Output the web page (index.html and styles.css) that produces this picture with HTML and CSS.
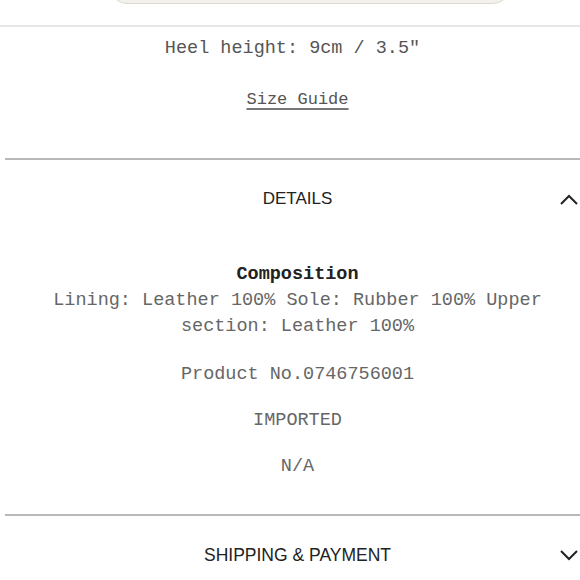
FILE: index.html
```html
<!DOCTYPE html>
<html lang="en">
<head>
<meta charset="utf-8">
<title>Product details</title>
<link rel="stylesheet" href="styles.css">
</head>
<body>
<div class="page">
  <div class="top-btn"></div>
  <div class="rule-light"></div>
  <div class="intro">
    <p class="mono heel">Heel height: 9cm / 3.5"</p>
    <p class="mono guide"><a class="guide-link" href="#">Size Guide</a></p>
  </div>
  <div class="divider"></div>
  <section class="acc">
    <div class="acc-head">
      <span class="acc-spacer"></span>
      <span class="acc-title">DETAILS</span>
      <svg class="chev" width="20" height="12" viewBox="0 0 20 12"><path d="M2 11 L10 3 L18 11" fill="none" stroke="#222" stroke-width="2"/></svg>
    </div>
    <div class="acc-body">
      <h3 class="mono comp-title">Composition</h3>
      <p class="mono comp">Lining: Leather 100% Sole: Rubber 100% Upper section: Leather 100%</p>
      <p class="mono item first">Product No.0746756001</p>
      <p class="mono item">IMPORTED</p>
      <p class="mono item">N/A</p>
    </div>
  </section>
  <div class="divider second"></div>
  <section class="acc">
    <div class="acc-head ship">
      <span class="acc-spacer"></span>
      <span class="acc-title">SHIPPING &amp; PAYMENT</span>
      <svg class="chev" width="20" height="12" viewBox="0 0 20 12"><path d="M2 2 L10 10 L18 2" fill="none" stroke="#222" stroke-width="2"/></svg>
    </div>
  </section>
</div>
</body>
</html>
```
FILE: styles.css
```css
html, body {
  margin: 0;
  padding: 0;
  background: #fff;
}
.page {
  width: 580px;
  overflow: hidden;
}
.top-btn {
  width: 404px;
  height: 40px;
  margin: -36px 0 0 108px;
  box-sizing: border-box;
  background: #f4f1ec;
  border: 1px solid #dcd8d2;
  border-radius: 22px;
}
.rule-light {
  margin-top: 21px;
  height: 2px;
  background: #e6e6e6;
}
.intro {
  padding-left: 15px;
}
.mono {
  font-family: "Liberation Mono", "Courier New", monospace;
  font-size: 18.5px;
  line-height: 26px;
  color: #666;
  text-align: center;
  margin: 0;
}
.heel {
  margin-top: 9px;
  margin-right: 10px;
  color: #555;
}
.guide {
  margin-top: 25px;
  font-size: 17px;
}
.guide-link {
  color: #555;
  text-decoration: underline;
  text-decoration-thickness: 2px;
  text-decoration-color: #777;
  text-underline-offset: 4px;
}
.divider {
  margin: 45px 0 0 5px;
  height: 2px;
  background: #b9b9b9;
}
.divider.second {
  margin-top: 34px;
}
.acc-head {
  height: 78px;
  display: grid;
  grid-template-columns: 1fr auto 1fr;
  align-items: center;
  padding-left: 15px;
}
.acc-title {
  font-family: "Liberation Sans", Arial, sans-serif;
  font-size: 17px;
  color: #222;
}
.ship .acc-title {
  font-size: 17.5px;
}
.chev {
  justify-self: end;
  margin-right: 1px;
}
.acc-body {
  padding: 24px 10px 0 25px;
}
.comp-title {
  font-weight: bold;
  color: #222;
}
.item {
  margin-top: 20px;
}
.item.first {
  margin-top: 22px;
}
```
